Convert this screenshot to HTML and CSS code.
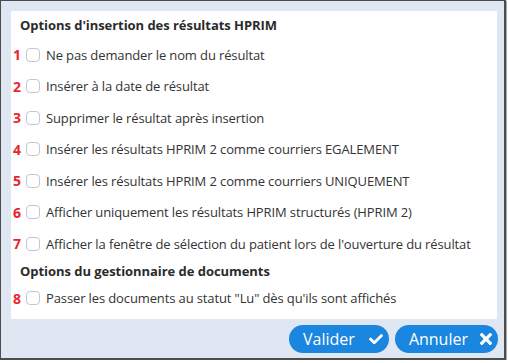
FILE: index.html
```html
<!DOCTYPE html>
<html lang="fr">
<head>
  <meta charset="UTF-8" />
  <title>Options HPRIM</title>
  <link rel="stylesheet" href="styles.css">
</head>
<body>
  <div class="dialog">
    <div class="panel">
      <h2 class="section-title">Options d'insertion des résultats HPRIM</h2>

      <label class="option"><span class="num">1</span><input type="checkbox"><span class="text">Ne pas demander le nom du résultat</span></label>
      <label class="option"><span class="num">2</span><input type="checkbox"><span class="text">Insérer à la date de résultat</span></label>
      <label class="option"><span class="num">3</span><input type="checkbox"><span class="text">Supprimer le résultat après insertion</span></label>
      <label class="option"><span class="num">4</span><input type="checkbox"><span class="text">Insérer les résultats HPRIM 2 comme courriers EGALEMENT</span></label>
      <label class="option"><span class="num">5</span><input type="checkbox"><span class="text">Insérer les résultats HPRIM 2 comme courriers UNIQUEMENT</span></label>
      <label class="option"><span class="num">6</span><input type="checkbox"><span class="text">Afficher uniquement les résultats HPRIM structurés (HPRIM 2)</span></label>
      <label class="option"><span class="num">7</span><input type="checkbox"><span class="text">Afficher la fenêtre de sélection du patient lors de l'ouverture du résultat</span></label>

      <h2 class="section-title second">Options du gestionnaire de documents</h2>

      <label class="option"><span class="num">8</span><input type="checkbox"><span class="text">Passer les documents au statut "Lu" dès qu'ils sont affichés</span></label>
    </div>

    <div class="footer">
      <button class="btn">Valider
        <svg class="icon-check" viewBox="0 64 512 384" width="14" height="10.5"><path fill="#fff" d="M173.898 439.404l-166.4-166.4c-9.997-9.997-9.997-26.206 0-36.204l36.203-36.204c9.997-9.998 26.207-9.998 36.204 0L192 312.69 432.095 72.596c9.997-9.997 26.207-9.997 36.204 0l36.203 36.204c9.997 9.997 9.997 26.206 0 36.204l-294.4 294.401c-9.998 9.997-26.207 9.997-36.204-.001z"/></svg>
      </button>
      <button class="btn">Annuler
        <svg class="icon-close" viewBox="0 80 352 352" width="12" height="12"><path fill="#fff" d="M242.72 256l100.07-100.07c12.28-12.28 12.28-32.19 0-44.48l-22.24-22.240c-12.28-12.28-32.19-12.28-44.48 0L176 189.28 75.93 89.21c-12.28-12.28-32.19-12.28-44.48 0L9.21 111.45c-12.28 12.28-12.28 32.19 0 44.48L109.28 256 9.21 356.07c-12.28 12.28-12.28 32.19 0 44.48l22.24 22.24c12.28 12.28 32.2 12.28 44.48 0L176 322.72l100.07 100.07c12.28 12.28 32.2 12.28 44.48 0l22.24-22.24c12.28-12.28 12.28-32.19 0-44.48L242.72 256z"/></svg>
      </button>
    </div>
  </div>
</body>
</html>
```

FILE: styles.css
```css
:root {
  --bg: #dfe8f2;
  --panel: #ffffff;
  --text: #333333;
  --title: #2b2b2b;
  --num: #e8262b;
  --blue: #1a86e0;
  --box-border: #c3c7cf;
}

* {
  box-sizing: border-box;
  margin: 0;
  padding: 0;
}

html, body {
  background: #ffffff;
  font-family: 'Open Sans', 'Liberation Sans', sans-serif;
  color: var(--text);
}

.dialog {
  width: 506px;
  height: 360px;
  background: var(--bg);
  border: 1px solid #4d4d4d;
  border-right-width: 2px;
  border-bottom-width: 2px;
  box-shadow: 1px 1px 0 #a9a9a9;
  padding: 10px 7px 0 10px;
}

.panel {
  width: 486px;
  height: 308px;
  background: var(--panel);
  padding: 5px 0 0 2px;
}

.section-title {
  font-size: 13px;
  font-weight: 700;
  line-height: 18px;
  color: var(--title);
  padding-left: 7px;
  margin-bottom: 5px;
  letter-spacing: -0.05px;
}

.section-title.second {
  line-height: 20px;
  margin: 1px 0 2px;
}

.option {
  display: flex;
  align-items: center;
  height: 31.5px;
  font-size: 13px;
}

.num {
  width: 8px;
  text-align: center;
  font-size: 14px;
  font-weight: 700;
  color: var(--num);
  margin-right: 5px;
}

.option input {
  appearance: none;
  width: 14px;
  height: 14px;
  border: 1px solid var(--box-border);
  border-radius: 4px;
  background: #fff;
  margin-right: 6px;
}

.text {
  white-space: nowrap;
  letter-spacing: -0.12px;
}

.footer {
  display: flex;
  justify-content: flex-end;
  gap: 6px;
  padding: 6px 0 0;
  margin-right: -1px;
}

.btn {
  display: flex;
  align-items: center;
  height: 28px;
  border: none;
  border-radius: 14px;
  background: var(--blue);
  color: #fff;
  font-family: 'Open Sans', 'Liberation Sans', sans-serif;
  font-size: 16px;
  padding: 0 6px 0 14px;
}

.icon-check {
  margin-left: 14px;
}

.icon-close {
  margin-left: 12px;
}
```
